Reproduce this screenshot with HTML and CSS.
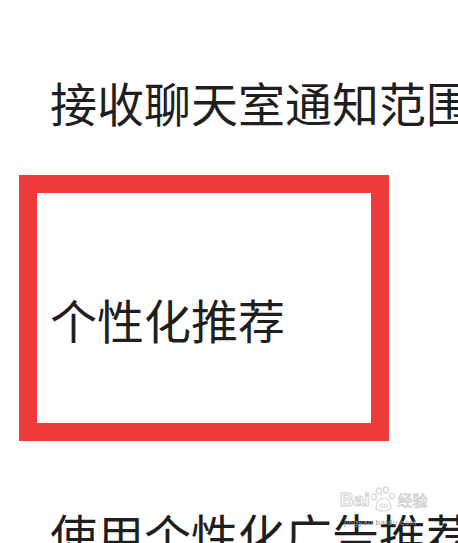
FILE: index.html
```
<!DOCTYPE html>
<html lang="zh-CN">
<head>
<meta charset="utf-8">
<link rel="stylesheet" href="styles.css">
</head>
<body>
<div class="page">
  <div class="row row-top">接收聊天室通知范围</div>
  <div class="box">
    <div class="row row-box">个性化推荐</div>
  </div>
  <div class="row row-bottom">使用个性化广告推荐</div>
  <div class="watermark">
    <span class="wm-bai">Bai</span>
    <svg class="wm-paw" width="26" height="26" viewBox="0 0 26 26">
      <g fill="none" stroke="#d6d6d6" stroke-width="1.2">
        <ellipse cx="8" cy="5" rx="2.6" ry="3.2"/>
        <ellipse cx="15" cy="4" rx="2.6" ry="3.2"/>
        <ellipse cx="3" cy="11" rx="2.3" ry="2.9"/>
        <ellipse cx="21" cy="10" rx="2.3" ry="2.9"/>
        <path d="M5 21c0-5 4-9 7.5-9s7.5 4 7.5 9c0 3-3 4-7.5 4S5 24 5 21z"/>
      </g>
      <text x="12.5" y="22" text-anchor="middle" font-size="8" fill="#cfcfcf" font-family="Liberation Sans, sans-serif">du</text>
    </svg>
    <span class="wm-jy">经验</span>
    <span class="wm-url">jingyan.baidu.com</span>
  </div>
</div>
</body>
</html>
```
FILE: styles.css
```
html, body {
  margin: 0;
  padding: 0;
  background: #ffffff;
}
.page {
  position: relative;
  width: 458px;
  height: 543px;
  overflow: hidden;
  font-family: "Noto Sans CJK SC", "Noto Sans", sans-serif;
  color: #1f1f1f;
}
.row {
  font-size: 47px;
  line-height: 48px;
  white-space: nowrap;
}
.row-top {
  padding: 78px 0 0 50px;
}
.box {
  margin: 49px 0 0 19px;
  width: 334px;
  height: 230px;
  border: 18px solid #ee3a3a;
  display: flex;
  flex-direction: column;
}
.row-box {
  padding: 102px 0 0 13px;
}
.row-bottom {
  padding: 69px 0 0 50px;
}
.watermark {
  position: absolute;
  left: 340px;
  top: 486px;
  display: flex;
  align-items: flex-end;
  gap: 1px;
  color: #d2d2d2;
  font-family: "Liberation Sans", sans-serif;
}
.wm-bai {
  font-size: 19px;
  line-height: 20px;
  font-weight: bold;
  color: #ffffff;
  -webkit-text-stroke: 1px #cfcfcf;
  margin-bottom: 2px;
}
.wm-paw {
  display: block;
}
.wm-jy {
  font-family: "Noto Sans CJK SC", sans-serif;
  font-size: 15px;
  line-height: 18px;
  color: #ffffff;
  -webkit-text-stroke: 0.8px #cfcfcf;
  margin-bottom: 3px;
}
.wm-url {
  position: absolute;
  left: 4px;
  top: 33px;
  font-size: 8px;
  line-height: 8px;
  color: #9a9a9a;
  letter-spacing: 0.5px;
}
```
